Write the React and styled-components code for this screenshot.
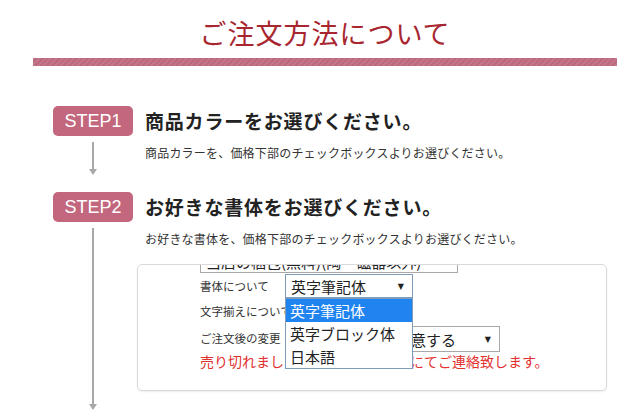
import React from 'react'
import styled, { createGlobalStyle } from 'styled-components'

const GlobalStyle = createGlobalStyle`
  html, body {
    margin: 0;
    padding: 0;
    background: #fff;
  }
  body {
    width: 640px;
    height: 420px;
    overflow: hidden;
    font-family: "Noto Sans CJK JP", "Noto Sans", sans-serif;
    color: #333;
  }
`

const Page = styled.div`
  padding-top: 14px;
`

const Header = styled.header`
  margin: 0 23px 0 33px;
  display: flex;
  flex-direction: column;
  align-items: center;
`

const Title = styled.h1`
  margin: 0;
  font-size: 27px;
  font-weight: 400;
  line-height: 37px;
  letter-spacing: 1px;
  color: #a8262f;
`

const Bar = styled.div`
  align-self: stretch;
  height: 8px;
  margin-top: 7px;
  background: repeating-linear-gradient(135deg, #c47589 0 2px, #bb6a7e 2px 4px);
`

const Steps = styled.div`
  margin-top: 40px;
  padding-left: 53px;
  display: flex;
  flex-direction: column;
  gap: 17px;
`

const Step = styled.section`
  display: grid;
  grid-template-columns: 80px 1fr;
  column-gap: 12px;
`

const Rail = styled.div`
  display: flex;
  flex-direction: column;
  align-items: center;
`

const Badge = styled.div`
  width: 80px;
  height: 30px;
  border-radius: 5px;
  background: #c2677d;
  color: #fff;
  font-family: "Liberation Sans", Arial, sans-serif;
  font-size: 18px;
  line-height: 30px;
  text-align: center;
`

const Arrow = styled.div`
  flex: 1;
  position: relative;
  width: 2px;
  margin: 6px 0 5px;
  background: #a8a8a8;

  &::after {
    content: '';
    position: absolute;
    left: -3px;
    bottom: -5px;
    border-left: 4px solid transparent;
    border-right: 4px solid transparent;
    border-top: 6px solid #a8a8a8;
  }
`

const Body = styled.div`
  display: flex;
  flex-direction: column;
  align-items: flex-start;
  padding-bottom: ${p => p.$pb}px;
`

const Heading = styled.h2`
  margin: 0;
  font-size: 19px;
  font-weight: 700;
  line-height: 30px;
  letter-spacing: 0.8px;
  color: #222;
`

const Note = styled.p`
  margin: 7px 0 0;
  font-size: 12px;
  line-height: 20px;
  letter-spacing: 0.2px;
  color: #333;
`

const Card = styled.div`
  box-sizing: border-box;
  width: 470px;
  height: 127px;
  margin: 15px 0 0 -8px;
  border: 1px solid #d9d9d9;
  border-radius: 5px;
  box-shadow: 0 1px 2px rgba(0, 0, 0, 0.08);
  overflow: hidden;
`

const Form = styled.div`
  display: grid;
  grid-template-columns: 85px auto;
  justify-content: start;
  align-items: center;
  row-gap: 1px;
  margin-top: -16px;
  padding-left: 62px;
`

const Label = styled.span`
  font-size: 11.5px;
  color: #333;
  white-space: nowrap;
`

const Field = styled.div`
  position: relative;
  grid-column: ${p => (p.$full ? '1 / -1' : 'auto')};
  margin-top: ${p => p.$mt || 0}px;
`

const Select = styled.div`
  box-sizing: border-box;
  display: flex;
  align-items: center;
  justify-content: space-between;
  width: ${p => p.$w}px;
  height: ${p => p.$h || 24}px;
  padding: 0 8px 0 5px;
  border: 1px solid ${p => (p.$focus ? '#7f9db9' : '#a9a9a9')};
  background: #fff;
  font-size: 15px;
  color: #222;
  white-space: nowrap;
  overflow: hidden;
`

const Caret = styled.span`
  font-family: "DejaVu Sans", sans-serif;
  font-size: 8px;
  color: #222;
`

const Menu = styled.ul`
  position: absolute;
  left: 0;
  top: 100%;
  z-index: 2;
  box-sizing: border-box;
  width: 128px;
  margin: 0;
  padding: 0;
  list-style: none;
  background: #fff;
  border: 1px solid #7f9db9;
`

const Option = styled.li`
  height: 23px;
  line-height: 23px;
  padding: 0 4px;
  font-size: 15px;
  white-space: nowrap;
  color: ${p => (p.$active ? '#fff' : '#222')};
  background: ${p => (p.$active ? '#1f84ef' : 'transparent')};
`

const Warning = styled.p`
  grid-column: 1 / -1;
  margin: 0;
  font-size: 14px;
  line-height: 17px;
  color: #e2302f;
  white-space: nowrap;
`

const fonts = ['英字筆記体', '英字ブロック体', '日本語']

export default function App() {
  return (
    <Page>
      <GlobalStyle />
      <Header>
        <Title>ご注文方法について</Title>
        <Bar />
      </Header>
      <Steps>
        <Step>
          <Rail>
            <Badge>STEP1</Badge>
            <Arrow />
          </Rail>
          <Body $pb={12}>
            <Heading>商品カラーをお選びください。</Heading>
            <Note>商品カラーを、価格下部のチェックボックスよりお選びください。</Note>
          </Body>
        </Step>
        <Step>
          <Rail>
            <Badge>STEP2</Badge>
            <Arrow />
          </Rail>
          <Body $pb={19}>
            <Heading>お好きな書体をお選びください。</Heading>
            <Note>お好きな書体を、価格下部のチェックボックスよりお選びください。</Note>
            <Card>
              <Form>
                <Field $full>
                  <Select $w={258}>
                    当店の梱包(無料)(陶・磁器以外)
                    <Caret>▼</Caret>
                  </Select>
                </Field>
                <Label>書体について</Label>
                <Field>
                  <Select $w={128} $focus>
                    英字筆記体
                    <Caret>▼</Caret>
                  </Select>
                  <Menu>
                    {fonts.map((f, i) => (
                      <Option key={f} $active={i === 0}>{f}</Option>
                    ))}
                  </Menu>
                </Field>
                <Label>文字揃えについて</Label>
                <Field>
                  <Select $w={128}>
                    中央揃え
                    <Caret>▼</Caret>
                  </Select>
                </Field>
                <Label>ご注文後の変更</Label>
                <Field $mt={2}>
                  <Select $w={215} $h={26}>
                    注文後の変更に同意する
                    <Caret>▼</Caret>
                  </Select>
                </Field>
                <Warning>売り切れました場合には、メールにてご連絡致します。</Warning>
              </Form>
            </Card>
          </Body>
        </Step>
      </Steps>
    </Page>
  )
}
